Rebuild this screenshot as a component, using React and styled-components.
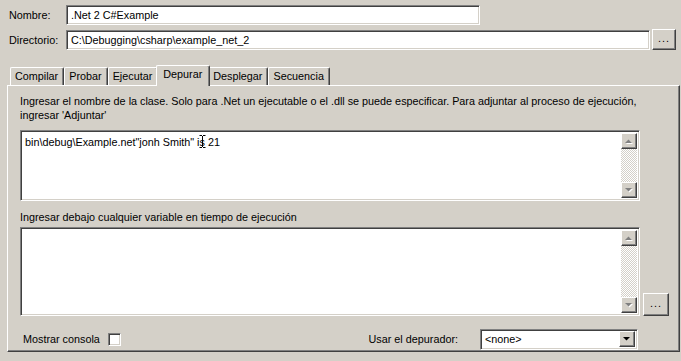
import React from "react";
import styled, { createGlobalStyle, css } from "styled-components";

const Global = createGlobalStyle`
  html, body {
    margin: 0;
    padding: 0;
    background: #d4d0c8;
  }
  body {
    font-family: "Liberation Sans", Arial, sans-serif;
    font-size: 10.8px;
    color: #000;
  }
`;

const sunken = css`
  border: 1px solid;
  border-color: #808080 #ffffff #ffffff #808080;
  box-shadow: inset 1px 1px 0 #404040, inset -1px -1px 0 #d4d0c8;
`;

const raised = css`
  border: 1px solid;
  border-color: #ffffff #404040 #404040 #ffffff;
  box-shadow: inset -1px -1px 0 #808080, inset 1px 1px 0 #d4d0c8;
  background: #d4d0c8;
`;

const Page = styled.div`
  width: 681px;
  height: 361px;
  box-sizing: border-box;
  padding-top: 5px;
  overflow: hidden;
`;

const FieldRow = styled.div`
  display: flex;
  align-items: center;
  padding-left: 9px;
  margin-bottom: 4px;
`;

const FieldLabel = styled.label`
  width: 57px;
  flex: none;
`;

const TextBox = styled.div`
  ${sunken};
  box-sizing: border-box;
  height: 20px;
  width: ${(p) => p.$w}px;
  background: #fff;
  padding: 3px 4px 0;
  white-space: nowrap;
`;

const DotsButton = styled.button`
  ${raised};
  box-sizing: border-box;
  width: ${(p) => p.$w}px;
  height: ${(p) => p.$h}px;
  margin-left: ${(p) => p.$gap}px;
  padding: 0 0 3px;
  font: inherit;
  letter-spacing: 1px;
  color: #000;
  display: flex;
  align-items: center;
  justify-content: center;
`;

const TabArea = styled.div`
  margin: 15px 0 0 7px;
  width: 673px;
`;

const TabStrip = styled.div`
  display: flex;
  align-items: flex-end;
  height: 20px;
  padding-left: 3px;
  position: relative;
  z-index: 1;
`;

const Tab = styled.div`
  box-sizing: border-box;
  height: ${(p) => (p.$active ? 21 : 18)}px;
  padding: 2px ${(p) => (p.$active ? 7 : 5)}px 0 ${(p) => (p.$active ? 6 : 4)}px;
  margin: 0 ${(p) => (p.$active ? -2 : 0)}px ${(p) => (p.$active ? -1 : 0)}px;
  border-left: 1px solid #fff;
  border-top: 1px solid #fff;
  border-right: 1px solid #404040;
  border-radius: 2px 2px 0 0;
  box-shadow: inset -1px 0 0 #808080;
  background: #d4d0c8;
  position: relative;
  z-index: ${(p) => (p.$active ? 2 : 0)};
  white-space: nowrap;
`;

const Panel = styled.div`
  box-sizing: border-box;
  height: 267px;
  border: 1px solid;
  border-color: #ffffff #404040 #404040 #ffffff;
  box-shadow: inset -1px -1px 0 #808080;
  padding: 8px 8px 0 12px;
  display: flex;
  flex-direction: column;
`;

const Hint = styled.p`
  margin: 0;
  max-width: 640px;
  line-height: 14px;
  margin-bottom: ${(p) => p.$after}px;
`;

const EditRow = styled.div`
  display: flex;
  align-items: flex-end;
  margin-bottom: ${(p) => p.$after}px;
`;

const Edit = styled.div`
  ${sunken};
  box-sizing: border-box;
  width: 620px;
  height: ${(p) => p.$h}px;
  background: #fff;
  display: flex;
  padding: 2px;
  position: relative;
`;

const EditText = styled.div`
  flex: 1;
  padding: 3px 2px;
  white-space: nowrap;
`;

const ScrollBar = styled.div`
  width: 16px;
  display: flex;
  flex-direction: column;
`;

const ScrollButton = styled.div`
  ${raised};
  box-sizing: border-box;
  width: 16px;
  height: 16px;
  flex: none;
  display: flex;
  align-items: center;
  justify-content: center;
`;

const Track = styled.div`
  flex: 1;
  background-color: #d4d0c8;
  background-image: conic-gradient(#ffffff 25%, #d4d0c8 0 50%, #ffffff 0 75%, #d4d0c8 0);
  background-size: 2px 2px;
`;

const Cursor = styled.svg`
  position: absolute;
  left: 178px;
  top: 4px;
`;

const BottomRow = styled.div`
  display: flex;
  align-items: center;
  height: 22px;
  margin-top: 12px;
`;

const CheckLabel = styled.span`
  margin-left: 3px;
`;

const CheckBox = styled.span`
  ${sunken};
  box-sizing: border-box;
  width: 13px;
  height: 13px;
  background: #fff;
  margin-left: 8px;
`;

const Spacer = styled.div`
  flex: 1;
`;

const SelectLabel = styled.span`
  margin-right: 22px;
`;

const Select = styled.div`
  ${sunken};
  box-sizing: border-box;
  width: 158px;
  height: 21px;
  background: #fff;
  display: flex;
  align-items: center;
  padding: 2px;
  margin-right: 33px;
`;

const SelectValue = styled.span`
  flex: 1;
  padding-left: 2px;
`;

const Arrow = ({ dir = "down", disabled }) => {
  const pts = dir === "up" ? "0,4 7,4 3.5,0.5" : "0,0 7,0 3.5,3.5";
  return (
    <svg width="8" height="5" viewBox="0 0 8 5">
      {disabled && (
        <polygon points={pts} fill="#fff" transform="translate(1,1)" />
      )}
      <polygon points={pts} fill={disabled ? "#808080" : "#000"} />
    </svg>
  );
};

const ScrollEdit = ({ h, children }) => (
  <Edit $h={h}>
    <EditText>{children}</EditText>
    <ScrollBar>
      <ScrollButton>
        <Arrow dir="up" disabled />
      </ScrollButton>
      <Track />
      <ScrollButton>
        <Arrow dir="down" disabled />
      </ScrollButton>
    </ScrollBar>
  </Edit>
);

const tabs = ["Compilar", "Probar", "Ejecutar", "Depurar", "Desplegar", "Secuencia"];

export default function App() {
  return (
    <Page>
      <Global />
      <FieldRow>
        <FieldLabel>Nombre:</FieldLabel>
        <TextBox $w={414}>.Net 2 C#Example</TextBox>
      </FieldRow>
      <FieldRow>
        <FieldLabel>Directorio:</FieldLabel>
        <TextBox $w={584}>C:\Debugging\csharp\example_net_2</TextBox>
        <DotsButton $w={24} $h={21} $gap={2}>...</DotsButton>
      </FieldRow>

      <TabArea>
        <TabStrip>
          {tabs.map((t) => (
            <Tab key={t} $active={t === "Depurar"}>
              {t}
            </Tab>
          ))}
        </TabStrip>
        <Panel>
          <Hint $after={8}>
            Ingresar el nombre de la clase. Solo para .Net un ejecutable o el .dll se puede especificar. Para adjuntar al proceso de ejecución, ingresar 'Adjuntar'
          </Hint>
          <EditRow $after={9}>
            <ScrollEdit h={71}>
              bin\debug\Example.net"jonh Smith" is 21
              <Cursor width="7" height="13" viewBox="0 0 7 13">
                <path d="M0.5 0.5h2.5M4 0.5h2.5M3.5 1v11M0.5 12.5h2.5M4 12.5h2.5" stroke="#000" fill="none" />
              </Cursor>
            </ScrollEdit>
          </EditRow>
          <Hint $after={3}>Ingresar debajo cualquier variable en tiempo de ejecución</Hint>
          <EditRow $after={0}>
            <ScrollEdit h={89} />
            <DotsButton $w={26} $h={23} $gap={3}>...</DotsButton>
          </EditRow>
          <BottomRow>
            <CheckLabel>Mostrar consola</CheckLabel>
            <CheckBox />
            <Spacer />
            <SelectLabel>Usar el depurador:</SelectLabel>
            <Select>
              <SelectValue>&lt;none&gt;</SelectValue>
              <ScrollButton>
                <Arrow dir="down" />
              </ScrollButton>
            </Select>
          </BottomRow>
        </Panel>
      </TabArea>
    </Page>
  );
}
